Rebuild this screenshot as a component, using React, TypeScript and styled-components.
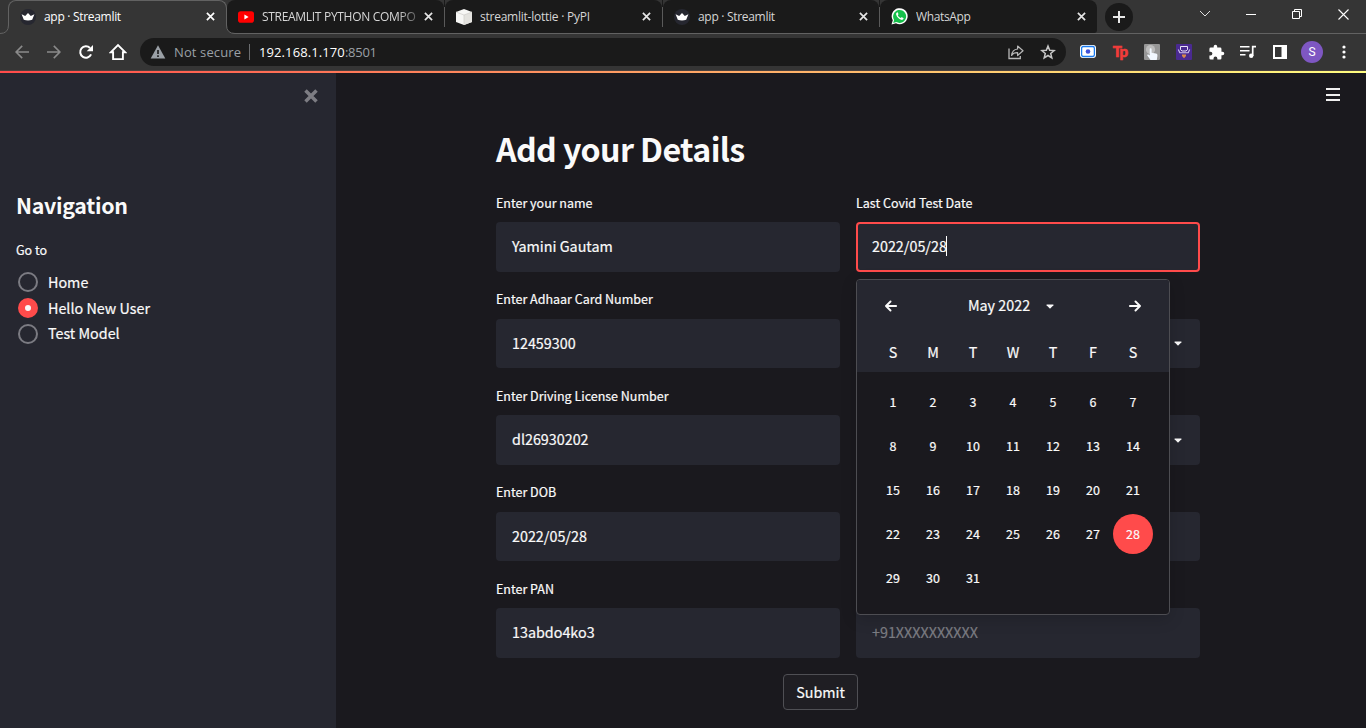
import React from 'react';
import styled, { createGlobalStyle } from 'styled-components';

const sans = `"Noto Sans CJK SC", "Noto Sans", sans-serif`;
const chromeFont = `"Open Sans", "Noto Sans", sans-serif`;

const GlobalStyle = createGlobalStyle`
  * { box-sizing: border-box; }
  html, body { margin: 0; padding: 0; overflow: hidden; background: #1a191e; }
  svg { display: block; flex: none; }
`;

const Window = styled.div`
  width: 1366px;
  height: 728px;
  overflow: hidden;
  display: flex;
  flex-direction: column;
  color: #fafafa;
  font-family: ${sans};
`;

/* ---------- browser chrome ---------- */

const TabStrip = styled.div`
  height: 34px;
  flex: none;
  display: flex;
  align-items: stretch;
  background: #353535;
  border-bottom: 1px solid #626262;
  padding-left: 8px;
`;

const Tab = styled.div<{ $active?: boolean; $last?: boolean; $width: number }>`
  position: relative;
  width: ${(p) => p.$width}px;
  height: ${(p) => (p.$active ? 34 : 33)}px;
  display: flex;
  align-items: center;
  padding: 0 11px ${(p) => (p.$active ? 2 : 0)}px 11px;
  color: ${(p) => (p.$active ? '#ffffff' : '#d6d6d6')};
  background: ${(p) => (p.$active ? '#353535' : '#1a1a1a')};
  border-radius: ${(p) => (p.$last ? '8px 8px 3px 0' : '8px 8px 0 0')};
  border: ${(p) => (p.$active ? '1px solid #626262' : '0 solid')};
  border-bottom: 0;
`;

const TabFlare = styled.svg<{ $side: 'left' | 'right' }>`
  position: absolute;
  bottom: 0;
  z-index: 1;
  ${(p) => p.$side}: -9px;
  transform: ${(p) => (p.$side === 'right' ? 'scaleX(-1)' : 'none')};
`;

const TabTitle = styled.span<{ $spacing?: number; $fade?: boolean }>`
  flex: 1;
  margin-left: 8px;
  font: 400 12px/16px ${chromeFont};
  letter-spacing: ${(p) => p.$spacing ?? -0.2}px;
  white-space: nowrap;
  overflow: hidden;
  mask-image: ${(p) => (p.$fade ? 'linear-gradient(90deg, #000 84%, transparent 101%)' : 'none')};
`;

const TabRule = styled.div`
  width: 1px;
  height: 20px;
  margin-top: 7px;
  background: #5a5a5a;
`;

const RuleSlot = styled.div`
  width: 1px;
  background: #1a1a1a;
`;

const NewTab = styled.div`
  width: 28px;
  height: 28px;
  margin: 3px 0 0 8px;
  border-radius: 50%;
  background: #1a1a1a;
  display: grid;
  place-items: center;
`;

const WindowButtons = styled.div`
  margin-left: auto;
  display: flex;
  padding-top: 5px;
  height: 23px;
`;

const WindowButton = styled.div`
  width: 46px;
  display: grid;
  place-items: center;
`;

const Toolbar = styled.div`
  height: 37px;
  flex: none;
  display: flex;
  align-items: center;
  background: #353535;
  border-bottom: 1px solid #49403f;
  padding-left: 6px;
`;

const ToolButton = styled.div`
  width: 32px;
  height: 32px;
  display: grid;
  place-items: center;
  flex: none;
`;

const AddressBar = styled.div`
  width: 926px;
  flex: none;
  height: 28px;
  margin: 0 6px;
  border-radius: 14px;
  background: #1a1a1a;
  display: flex;
  align-items: center;
  padding: 0 2px 0 10px;
  font: 400 13px/18px ${chromeFont};
`;

const NotSecure = styled.span`
  margin-left: 8px;
  width: 67px;
  color: #9aa0a6;
  letter-spacing: 0.12px;
  white-space: nowrap;
`;

const AddressRule = styled.i`
  width: 1px;
  height: 16px;
  margin: 0 9px 0 8px;
  background: #6b6d70;
`;

const Host = styled.span`
  color: #ffffff;
  letter-spacing: 0.1px;
`;

const Port = styled.span`
  flex: 1;
  color: #9aa0a6;
  letter-spacing: -0.25px;
`;

const Avatar = styled.div`
  width: 22px;
  height: 22px;
  border-radius: 50%;
  background: #7e57c2;
  font: 400 12px/22px Roboto, sans-serif;
  text-align: center;
  color: #fff;
`;

const TpMark = styled.span`
  margin-top: -2px;
  font: 900 15px/16px Lato, sans-serif;
  color: #f23c3a;
  letter-spacing: -0.8px;
  -webkit-text-stroke: 0.6px #f23c3a;
`;

/* ---------- page ---------- */

const Decoration = styled.div`
  height: 2px;
  flex: none;
  background: linear-gradient(90deg, #ff4b4b, #fffd80);
`;

const Page = styled.div`
  flex: 1;
  display: flex;
  min-height: 0;
  background: #1a191e;
  -webkit-text-stroke: 0.2px currentColor;
`;

const Sidebar = styled.aside`
  width: 336px;
  background: #262730;
  padding: 15px 16px 0;
`;

const CloseRow = styled.div`
  display: flex;
  justify-content: flex-end;
  height: 16px;
  padding-right: 1px;
`;

const NavTitle = styled.h2`
  margin: 84px 0 0;
  font: 700 21.4px/34px ${sans};
  letter-spacing: -0.3px;
  -webkit-text-stroke: 0;
`;

const NavLabel = styled.div`
  margin-top: 17px;
  font: 400 12.5px/22px ${sans};
`;

const RadioList = styled.div`
  margin-top: 8.4px;
`;

const RadioRow = styled.div`
  height: 25.8px;
  display: flex;
  align-items: center;
  gap: 10px;
  padding-left: 2px;
  font: 400 14.33px/24px ${sans};
`;

const Radio = styled.i<{ $on?: boolean }>`
  width: 20px;
  height: 20px;
  border-radius: 50%;
  border: ${(p) => (p.$on ? '7px solid #ff4b4b' : '2px solid #7b7b82')};
  background: ${(p) => (p.$on ? '#fafafa' : 'transparent')};
`;

const RadioText = styled.span`
  padding-bottom: 1px;
`;

const Main = styled.main`
  flex: 1;
  position: relative;
  display: flex;
  flex-direction: column;
  padding: 0 166px 0 160px;
`;

const MenuButton = styled.div`
  position: absolute;
  top: 15px;
  right: 26px;
  width: 14px;
  height: 13px;
  display: flex;
  flex-direction: column;
  justify-content: space-between;
`;

const MenuBar = styled.i`
  height: 2px;
  background: #f0f0f0;
`;

const Title = styled.h1`
  margin: 52px 0 0;
  height: 48px;
  font: 700 32.2px/46px ${sans};
  letter-spacing: -0.62px;
  white-space: nowrap;
  -webkit-text-stroke: 0;
`;

const Columns = styled.div`
  display: flex;
  gap: 16px;
  margin-top: 16px;
`;

const Column = styled.div`
  width: 344px;
  position: relative;
`;

const Field = styled.div`
  height: 96.5px;
`;

const FieldLabel = styled.div`
  height: 33.2px;
  padding-top: 2.9px;
  font: 400 12.5px/22px ${sans};
  white-space: nowrap;
`;

const InputBox = styled.div<{ $focused?: boolean }>`
  height: 49.4px;
  display: flex;
  align-items: center;
  background: #262730;
  border-radius: 4px;
  border: ${(p) => (p.$focused ? 2 : 0)}px solid #ff4b4b;
  padding: 0 ${(p) => (p.$focused ? 14 : 16)}px 0.8px;
  font: 400 14.33px/24px ${sans};
  white-space: nowrap;
`;

const Caret = styled.i`
  width: 1px;
  height: 20px;
  margin: -1px 0 0 -1px;
  background: #fff;
`;

const Placeholder = styled.span`
  color: #7b7c82;
`;

const SelectArrow = styled.span`
  margin: 1.5px 2px 0 auto;
`;

const Calendar = styled.div`
  position: absolute;
  top: 90px;
  left: 0;
  width: 314px;
  height: 336px;
  border: 1px solid #4d4d52;
  border-radius: 4px;
  background: #1a191e;
  box-shadow: 0 4px 16px rgba(0, 0, 0, 0.16);
  overflow: hidden;
`;

const CalendarHead = styled.div`
  background: #262730;
  height: 92px;
  padding: 14px 16px 0;
`;

const MonthRow = styled.div`
  display: flex;
  align-items: center;
  height: 24px;
  padding: 0 12px;
`;

const MonthName = styled.div`
  flex: 1;
  display: flex;
  align-items: center;
  justify-content: center;
  gap: 16px;
  padding-right: 4px;
  font: 400 14.33px/24px ${sans};
`;

const MonthText = styled.span`
  padding-bottom: 2px;
`;

const WeekRow = styled.div`
  display: grid;
  grid-template-columns: repeat(7, 40px);
  margin-top: 22px;
  font: 400 14.33px/24px ${sans};
  text-align: center;
`;

const DayGrid = styled.div`
  display: grid;
  grid-template-columns: repeat(7, 40px);
  grid-auto-rows: 40px;
  row-gap: 4px;
  padding: 10px 16px;
`;

const Day = styled.div<{ $selected?: boolean }>`
  border-radius: 50%;
  background: ${(p) => (p.$selected ? '#ff4b4b' : 'transparent')};
  font: 400 12.5px/40px ${sans};
  text-align: center;
`;

const Submit = styled.button`
  align-self: center;
  width: 75px;
  height: 36px;
  margin: 2px 0 0 -55px;
  padding: 0;
  color: #fafafa;
  background: #1f1e23;
  border: 1px solid #4f4f54;
  border-radius: 4px;
  font: 400 14.33px/32px ${sans};
  -webkit-text-stroke: 0.2px currentColor;
`;

/* ---------- icons ---------- */

const CrownIcon = () => (
  <svg width="16" height="16" viewBox="0 0 16 16">
    <circle cx="8" cy="8" r="8" fill="#262730" />
    <path d="M1.6 5.2 5.2 7 8 3.9 10.8 7l3.6-1.8-2.2 5.6Q8 12.3 3.8 10.8Z" fill="#fff" />
  </svg>
);

const YoutubeIcon = () => (
  <svg width="16" height="16" viewBox="0 0 16 16">
    <rect y="2.3" width="16" height="11.4" rx="2.8" fill="#f00" />
    <path d="M6.4 5.5v5L10.6 8z" fill="#fff" />
  </svg>
);

const CubeIcon = () => (
  <svg width="16" height="16" viewBox="0 0 16 16">
    <path d="M8 0l8 3v10l-8 3-8-3V3z" fill="#f7f7f5" />
    <path d="M8 6l8-3v10l-8 3z" fill="#e4e3df" />
    <path d="M0 3l8 3 8-3M8 6v10" fill="none" stroke="#cfcdc8" strokeWidth=".7" />
  </svg>
);

const WhatsAppIcon = () => (
  <svg width="17" height="17" viewBox="0 0 17 17">
    <path d="M.5 16.5l1.3-4.2A8 8 0 1 1 5 15.3z" fill="#fff" />
    <path d="M2.2 14.9l.9-3a6.5 6.5 0 1 1 2.3 2.2z" fill="#16c04b" />
    <path
      d="M6.2 4.4c-.9.3-1.4 1.3-1 2.4.8 2.4 2.5 4.2 5 5 1.1.3 2.1-.2 2.4-1.2.1-.4 0-.6-.3-.7l-1.4-.7c-.3-.1-.5 0-.7.2l-.5.6c-1.3-.5-2.3-1.5-2.9-2.8l.5-.6c.2-.2.2-.4.1-.6l-.6-1.4c-.1-.2-.3-.3-.6-.2z"
      fill="#fff"
    />
  </svg>
);

const TabClose = ({ color = '#e4e4e4' }: { color?: string }) => (
  <svg width="9" height="9" viewBox="0 0 9 9">
    <path d="M.9.9l7.2 7.2M8.1.9L.9 8.1" stroke={color} strokeWidth="1.7" />
  </svg>
);

const Flare = ({ side }: { side: 'left' | 'right' }) => (
  <TabFlare $side={side} width="9" height="9" viewBox="0 0 9 9">
    <path d="M0 9V8.500Q8.500 8.500 8.500 0H9V9z" fill="#353535" />
    <path d="M0 8.500Q8.500 8.500 8.500 0" fill="none" stroke="#626262" />
  </TabFlare>
);

const ArrowIcon = ({ flip }: { flip?: boolean }) => (
  <svg width="14" height="14" viewBox="0 0 14 14" transform={flip ? 'scale(-1 1)' : undefined}>
    <path d="M14 7H1.2M7.2.9L1.1 7l6.1 6.1" fill="none" stroke="#8a8a8a" strokeWidth="1.6" />
  </svg>
);

const ReloadIcon = () => (
  <svg width="16" height="16" viewBox="0 0 16 16">
    <path d="M13.1 10.4A5.7 5.7 0 1 1 12 4" fill="none" stroke="#fff" strokeWidth="2" />
    <path d="M15 1v6.3H8.7z" fill="#fff" />
  </svg>
);

const HomeIcon = () => (
  <svg width="18" height="18" viewBox="0 0 18 18">
    <path d="M1.7 9.3L9 2l7.3 7.3h-2.4v6.8H4.1V9.3z" fill="none" stroke="#fff" strokeWidth="1.9" />
  </svg>
);

const WarningIcon = () => (
  <svg width="16" height="16" viewBox="0 0 16 16">
    <path d="M8 1.3L15.3 14.5H.7z" fill="#9aa0a6" />
    <path d="M8 6v4M8 11.2v1.7" stroke="#1a1a1a" strokeWidth="1.6" />
  </svg>
);

const ShareIcon = () => (
  <svg width="16" height="16" viewBox="0 0 16 16">
    <path d="M1 4.500v10h11.300v-2.600" fill="none" stroke="#b8b8b8" strokeWidth="1.300" />
    <path
      d="M9.600 5V2l5.400 4.800-5.400 4.700V8.600C6.600 8.500 4.700 9.400 3.600 11.400 4 7.700 6 5.400 9.600 5z"
      fill="none"
      stroke="#b8b8b8"
      strokeWidth="1.200"
      strokeLinejoin="round"
    />
  </svg>
);

const StarIcon = () => (
  <svg width="16" height="16" viewBox="0 0 16 16">
    <path
      d="M8 2.100l1.700 4.200 4.500.3-3.500 2.900 1.100 4.400L8 11.500l-3.800 2.400 1.100-4.400L1.800 6.600l4.500-.3z"
      fill="none"
      stroke="#c6c6c6"
      strokeWidth="1.500"
    />
  </svg>
);

const CameraIcon = () => (
  <svg width="16" height="14" viewBox="0 0 16 14">
    <rect width="16" height="13" rx="3" fill="#fff" />
    <rect x="1.600" y="1.500" width="12.800" height="10" rx="1.800" fill="none" stroke="#1a7bf0" strokeWidth="1.300" />
    <circle cx="8" cy="6.500" r="2.300" fill="#3f51d8" />
  </svg>
);

const HandIcon = () => (
  <svg width="16" height="16" viewBox="0 0 16 16">
    <rect width="16" height="16" rx="1" fill="#979797" />
    <circle cx="6.500" cy="5.500" r="4.600" fill="#bdbdbd" />
    <path
      d="M5.700 5.200c0-1.300 1.900-1.300 1.900 0v3.600l4.300.8c1.200.3 1.700 1.100 1.500 2.300L12.800 16H6.500L3.300 11.600c-.4-.8.5-1.500 1.200-1l1.200.9z"
      fill="#f2f8ff"
    />
  </svg>
);

const DroneIcon = () => (
  <svg width="16" height="16" viewBox="0 0 16 16">
    <rect width="16" height="16" rx="1" fill="#4a2a91" />
    <path d="M4.500 2.500h7v3.200l-1.500 1.300h-4L4.500 5.700z" fill="none" stroke="#e8e2f7" />
    <path d="M2.300 5.500l1.500 3.300h8.400l1.500-3.300" fill="none" stroke="#cfc2ee" strokeWidth="1.100" />
    <path d="M6 10.500h4v1.400l-2 2.300-2-2.300z" fill="#d98a4b" />
  </svg>
);

const PuzzleIcon = () => (
  <svg width="17" height="17" viewBox="0 0 24 24">
    <path
      d="M20.500 11H19V7a2 2 0 0 0-2-2h-4V3.500a2.500 2.500 0 0 0-5 0V5H4a2 2 0 0 0-2 2v3.800h1.500a2.700 2.700 0 0 1 0 5.400H2V20a2 2 0 0 0 2 2h3.800v-1.500a2.700 2.700 0 0 1 5.400 0V22H17a2 2 0 0 0 2-2v-4h1.500a2.500 2.500 0 0 0 0-5z"
      fill="#fff"
    />
  </svg>
);

const MusicIcon = () => (
  <svg width="16" height="14" viewBox="0 0 16 14">
    <path d="M0 1.700h9.500M0 5.700h9.500M0 9.700h5.500" stroke="#fff" strokeWidth="1.500" />
    <path d="M12.700 11V1.700H16" fill="none" stroke="#fff" strokeWidth="1.700" />
    <circle cx="11.200" cy="10.700" r="2.200" fill="#fff" />
  </svg>
);

const PanelIcon = () => (
  <svg width="14" height="14" viewBox="0 0 14 14">
    <path d="M0 0h14v14H0zM2 2v10h6.500V2z" fill="#fff" fillRule="evenodd" />
  </svg>
);

const KebabIcon = () => (
  <svg width="4" height="14" viewBox="0 0 4 14">
    <circle cx="2" cy="2" r="1.600" fill="#fff" />
    <circle cx="2" cy="7" r="1.600" fill="#fff" />
    <circle cx="2" cy="12" r="1.600" fill="#fff" />
  </svg>
);

const CaretIcon = () => (
  <svg width="8" height="5" viewBox="0 0 8 5">
    <path d="M.8.5h6.400q.5.300.2.700L4.500 4.200q-.5.400-1 0L.6 1.200Q.3.800.8.500z" fill="#fafafa" />
  </svg>
);

const CalendarArrow = ({ flip }: { flip?: boolean }) => (
  <svg width="12" height="12" viewBox="0 0 12 12" transform={flip ? 'scale(-1 1)' : undefined}>
    <path
      d="M11.200 6H1.300M5.500 1.500L1 6l4.500 4.500"
      fill="none"
      stroke="#fafafa"
      strokeWidth="1.900"
      strokeLinecap="round"
      strokeLinejoin="round"
    />
  </svg>
);

/* ---------- data ---------- */

const tabs = [
  { icon: <YoutubeIcon />, title: 'STREAMLIT PYTHON COMPO', width: 217, spacing: -0.3, fade: true },
  { icon: <CubeIcon />, title: 'streamlit-lottie · PyPI', width: 217, spacing: -0.24 },
  { icon: <CrownIcon />, title: 'app · Streamlit', width: 216, spacing: -0.3 },
  { icon: <WhatsAppIcon />, title: 'WhatsApp', width: 217, spacing: -0.35 },
];

const leftFields = [
  ['Enter your name', 'Yamini Gautam'],
  ['Enter Adhaar Card Number', '12459300'],
  ['Enter Driving License Number', 'dl26930202'],
  ['Enter DOB', '2022/05/28'],
  ['Enter PAN', '13abdo4ko3'],
];

const SelectField = () => (
  <Field>
    <FieldLabel />
    <InputBox>
      <SelectArrow><CaretIcon /></SelectArrow>
    </InputBox>
  </Field>
);

export default function App() {
  return (
    <Window>
      <GlobalStyle />
      <TabStrip>
        <Tab $active $width={219}>
          <Flare side="left" />
          <CrownIcon />
          <TabTitle $spacing={-0.3}>app · Streamlit</TabTitle>
          <TabClose color="#fff" />
          <Flare side="right" />
        </Tab>
        {tabs.map((t, i) => (
          <React.Fragment key={t.title}>
            <Tab $width={t.width} $last={i === 3}>
              {t.icon}
              <TabTitle $spacing={t.spacing} $fade={t.fade}>{t.title}</TabTitle>
              <TabClose />
            </Tab>
            {i < 3 && <RuleSlot><TabRule /></RuleSlot>}
          </React.Fragment>
        ))}
        <NewTab>
          <svg width="12" height="12" viewBox="0 0 12 12">
            <path d="M6 0v12M0 6h12" stroke="#e8e8e8" strokeWidth="2" />
          </svg>
        </NewTab>
        <WindowButtons>
          <WindowButton>
            <svg width="12" height="8" viewBox="0 0 12 8">
              <path d="M1 1l5 5 5-5" fill="none" stroke="#e0e0e0" />
            </svg>
          </WindowButton>
          <WindowButton>
            <svg width="10" height="2" viewBox="0 0 10 2"><path d="M0 1.500h10" stroke="#fff" /></svg>
          </WindowButton>
          <WindowButton>
            <svg width="10" height="10" viewBox="0 0 10 10">
              <path d="M.5 2.500h7v7h-7zM2.500 2.500v-2h7v7h-2" fill="none" stroke="#fff" />
            </svg>
          </WindowButton>
          <WindowButton>
            <svg width="11" height="11" viewBox="0 0 11 11">
              <path d="M.5.5l10 10M10.500.5l-10 10" stroke="#fff" strokeWidth="1.100" />
            </svg>
          </WindowButton>
        </WindowButtons>
      </TabStrip>
      <Toolbar>
        <ToolButton><ArrowIcon /></ToolButton>
        <ToolButton><ArrowIcon flip /></ToolButton>
        <ToolButton><ReloadIcon /></ToolButton>
        <ToolButton><HomeIcon /></ToolButton>
        <AddressBar>
          <WarningIcon />
          <NotSecure>Not secure</NotSecure>
          <AddressRule />
          <Host>192.168.1.170</Host>
          <Port>:8501</Port>
          <ToolButton><ShareIcon /></ToolButton>
          <ToolButton><StarIcon /></ToolButton>
        </AddressBar>
        <ToolButton><CameraIcon /></ToolButton>
        <ToolButton><TpMark>Tp</TpMark></ToolButton>
        <ToolButton><HandIcon /></ToolButton>
        <ToolButton><DroneIcon /></ToolButton>
        <ToolButton><PuzzleIcon /></ToolButton>
        <ToolButton><MusicIcon /></ToolButton>
        <ToolButton><PanelIcon /></ToolButton>
        <ToolButton><Avatar>S</Avatar></ToolButton>
        <ToolButton><KebabIcon /></ToolButton>
      </Toolbar>
      <Decoration />
      <Page>
        <Sidebar>
          <CloseRow>
            <svg width="16" height="16" viewBox="0 0 16 16">
              <path d="M2.500 2.500l11 11M13.500 2.500l-11 11" stroke="#7d7d83" strokeWidth="3.500" />
            </svg>
          </CloseRow>
          <NavTitle>Navigation</NavTitle>
          <NavLabel>Go to</NavLabel>
          <RadioList>
            <RadioRow><Radio /><RadioText>Home</RadioText></RadioRow>
            <RadioRow><Radio $on /><RadioText>Hello New User</RadioText></RadioRow>
            <RadioRow><Radio /><RadioText>Test Model</RadioText></RadioRow>
          </RadioList>
        </Sidebar>
        <Main>
          <MenuButton><MenuBar /><MenuBar /><MenuBar /></MenuButton>
          <Title>Add your Details</Title>
          <Columns>
            <Column>
              {leftFields.map(([label, value]) => (
                <Field key={label}>
                  <FieldLabel>{label}</FieldLabel>
                  <InputBox>{value}</InputBox>
                </Field>
              ))}
            </Column>
            <Column>
              <Field>
                <FieldLabel>Last Covid Test Date</FieldLabel>
                <InputBox $focused>2022/05/28<Caret /></InputBox>
              </Field>
              <SelectField />
              <SelectField />
              <Field><FieldLabel /><InputBox /></Field>
              <Field>
                <FieldLabel />
                <InputBox><Placeholder>+91XXXXXXXXXX</Placeholder></InputBox>
              </Field>
              <Calendar>
                <CalendarHead>
                  <MonthRow>
                    <CalendarArrow />
                    <MonthName><MonthText>May 2022</MonthText><CaretIcon /></MonthName>
                    <CalendarArrow flip />
                  </MonthRow>
                  <WeekRow>
                    {['S', 'M', 'T', 'W', 'T', 'F', 'S'].map((d, i) => <span key={i}>{d}</span>)}
                  </WeekRow>
                </CalendarHead>
                <DayGrid>
                  {Array.from({ length: 31 }, (_, i) => (
                    <Day key={i} $selected={i === 27}>{i + 1}</Day>
                  ))}
                </DayGrid>
              </Calendar>
            </Column>
          </Columns>
          <Submit>Submit</Submit>
        </Main>
      </Page>
    </Window>
  );
}
